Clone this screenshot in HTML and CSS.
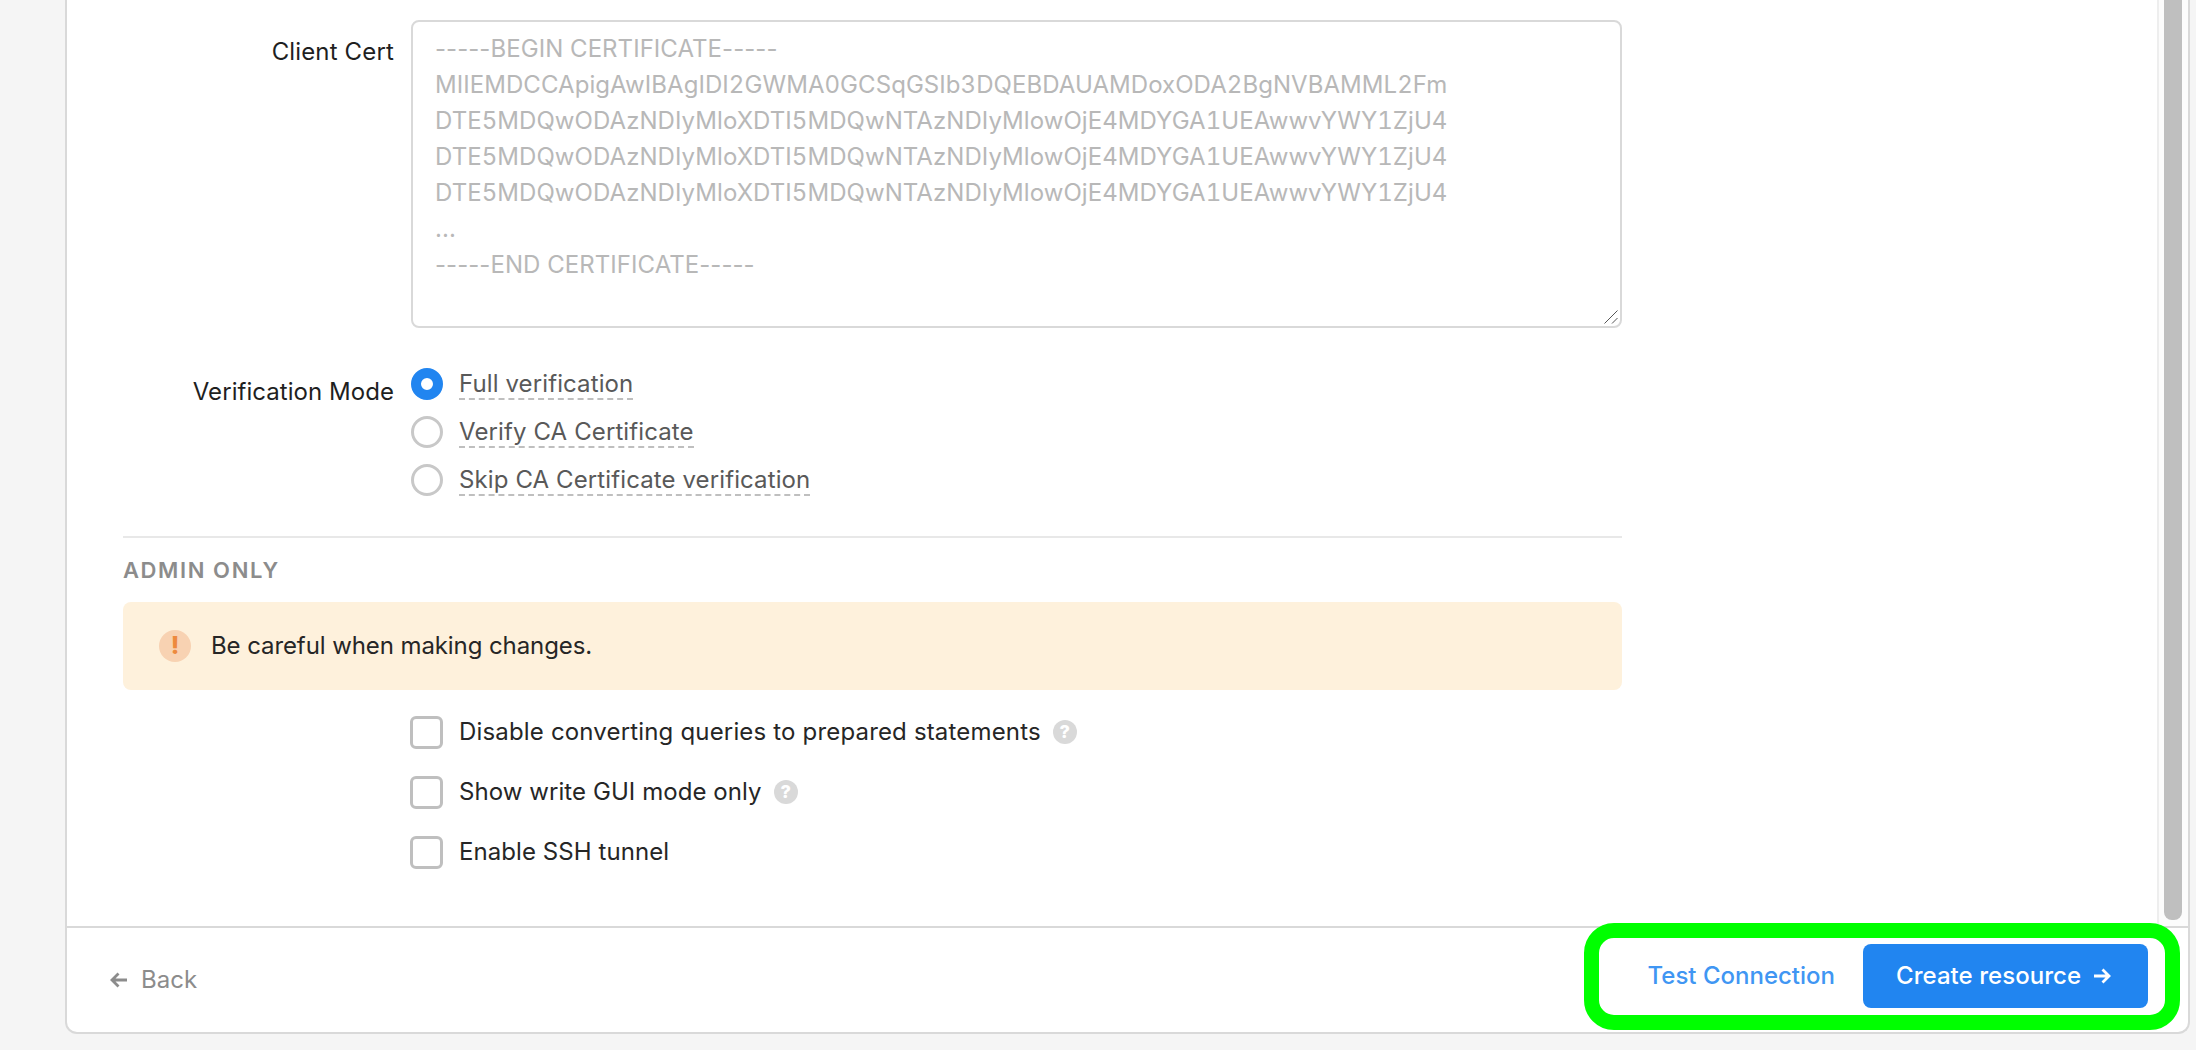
FILE: index.html
```html
<!DOCTYPE html>
<html>
<head>
<meta charset="utf-8">
<title>Create resource</title>
<link rel="stylesheet" href="styles.css">
</head>
<body>

<div class="card">
	<div class="scroll-area">
		<form class="form-body">
			<div class="form-row">
				<label class="row-label label-cert">Client Cert</label>
				<div class="cert-input">
					<div>-----BEGIN CERTIFICATE-----</div>
					<div class="cert-data">MIIEMDCCApigAwIBAgIDI2GWMA0GCSqGSIb3DQEBDAUAMDoxODA2BgNVBAMML2Fm</div>
					<div class="cert-data">DTE5MDQwODAzNDIyMloXDTI5MDQwNTAzNDIyMlowOjE4MDYGA1UEAwwvYWY1ZjU4</div>
					<div class="cert-data">DTE5MDQwODAzNDIyMloXDTI5MDQwNTAzNDIyMlowOjE4MDYGA1UEAwwvYWY1ZjU4</div>
					<div class="cert-data">DTE5MDQwODAzNDIyMloXDTI5MDQwNTAzNDIyMlowOjE4MDYGA1UEAwwvYWY1ZjU4</div>
					<div>...</div>
					<div>-----END CERTIFICATE-----</div>
					<svg class="resizer" width="14" height="14" viewBox="0 0 14 14"><path d="M0.500 13.500L13.500 0.500M8 13.500L13.500 8" fill="none" stroke="#555" stroke-width="1"/></svg>
				</div>
			</div>

			<div class="form-row radio-row">
				<label class="row-label">Verification Mode</label>
				<div class="radio-group">
					<div class="radio-item"><span class="radio checked"></span><span class="radio-text">Full verification</span></div>
					<div class="radio-item"><span class="radio"></span><span class="radio-text">Verify CA Certificate</span></div>
					<div class="radio-item"><span class="radio"></span><span class="radio-text">Skip CA Certificate verification</span></div>
				</div>
			</div>

			<hr class="divider">
			<h4 class="section-title">ADMIN ONLY</h4>

			<div class="alert">
				<span class="alert-icon">!</span>
				<span class="alert-text">Be careful when making changes.</span>
			</div>

			<div class="check-group">
				<div class="check-item"><span class="checkbox"></span><span class="check-text-wide">Disable converting queries to prepared statements</span><span class="help">?</span></div>
				<div class="check-item"><span class="checkbox"></span><span>Show write GUI mode only</span><span class="help">?</span></div>
				<div class="check-item"><span class="checkbox"></span><span>Enable SSH tunnel</span></div>
			</div>
		</form>
		<div class="scrollbar"><div class="scrollbar-thumb"></div></div>
	</div>

	<div class="card-footer">
		<a class="back-link">
			<svg class="arrow" width="18" height="16" viewBox="0 0 18 16"><path d="M17 8H2M8.500 1.500L2 8l6.500 6.500" fill="none" stroke="currentColor" stroke-width="2.800"/></svg>
			Back
		</a>
		<div class="footer-actions">
			<a class="test-link">Test Connection</a>
			<a class="create-btn"><span>Create resource</span>
				<svg class="arrow" width="18" height="16" viewBox="0 0 18 16"><path d="M1 8h15M9.500 1.500L16 8l-6.500 6.500" fill="none" stroke="currentColor" stroke-width="2.800"/></svg>
			</a>
		</div>
	</div>
</div>

</body>
</html>
```

FILE: styles.css
```css
html, body {
	margin: 0;
	height: 1050px;
	overflow: hidden;
}
body {
	background-color: #f5f5f5;
	font: 24px/36px "Inter", "Liberation Sans", sans-serif;
	font-optical-sizing: none;
	color: #262626;
}
.card {
	box-sizing: border-box;
	width: 2125px;
	height: 1034px;
	margin-left: 65px;
	background-color: #fff;
	border: 2px solid #d9d9d9;
	border-top: none;
	border-radius: 0 0 12px 12px;
	display: flex;
	flex-direction: column;
}
.scroll-area {
	display: flex;
	height: 926px;
}
.form-body {
	box-sizing: border-box;
	width: 1557px;
	padding: 20px 0 0 56px;
}
.form-row {
	display: grid;
	grid-template-columns: 271px 1211px;
	column-gap: 17px;
}
.row-label {
	padding-top: 14px;
	text-align: right;
	color: #1f1f1f;
	letter-spacing: 0.050px;
}
.label-cert {
	letter-spacing: 0.150px;
}
.cert-input {
	position: relative;
	box-sizing: border-box;
	height: 308px;
	padding: 9px 22px;
	border: 2px solid #d9d9d9;
	border-radius: 8px;
	color: #b8b8b8;
	letter-spacing: 0.050px;
}
.cert-data {
	font-feature-settings: "tnum";
	letter-spacing: 0.060px;
}
.resizer {
	position: absolute;
	right: 2px;
	bottom: 2px;
}
.radio-row {
	margin-top: 32px;
}
.radio-item {
	display: flex;
	align-items: center;
	height: 48px;
}
.radio {
	box-sizing: border-box;
	width: 32px;
	height: 32px;
	margin-right: 16px;
	border: 3px solid #c8c8c8;
	border-radius: 50%;
	background-color: #fff;
}
.radio.checked {
	border: 10px solid #2185f0;
}
.radio-text {
	padding-top: 2px;
	color: #595959;
	line-height: 28px;
	letter-spacing: 0.110px;
	border-bottom: 2px dashed #bfbfbf;
}
.divider {
	width: 1499px;
	height: 2px;
	margin: 32px 0 0;
	border: none;
	background-color: #e8e8e8;
}
.section-title {
	margin: 14px 0 0;
	font-size: 22px;
	font-weight: 600;
	letter-spacing: 1.600px;
	color: #8c8c8c;
}
.alert {
	display: flex;
	align-items: center;
	box-sizing: border-box;
	width: 1499px;
	height: 88px;
	margin-top: 14px;
	padding-left: 36px;
	border-radius: 8px;
	background-color: #fef1dc;
}
.alert-icon {
	width: 32px;
	height: 32px;
	margin-right: 20px;
	border-radius: 50%;
	background-color: #f8d2b2;
	color: #ed8a3e;
	font-size: 24px;
	font-weight: 800;
	line-height: 32px;
	text-align: center;
}
.alert-text {
	letter-spacing: -0.090px;
}
.check-group {
	margin: 12px 0 0 287px;
	letter-spacing: 0.070px;
}
.check-item {
	display: flex;
	align-items: center;
	height: 60px;
}
.check-text-wide {
	letter-spacing: 0.170px;
}
.checkbox {
	box-sizing: border-box;
	width: 33px;
	height: 33px;
	margin-right: 16px;
	border: 3px solid #bfbfbf;
	border-radius: 6px;
}
.help {
	width: 24px;
	height: 24px;
	margin-left: 12px;
	border-radius: 50%;
	background-color: #d9d9d9;
	color: #fff;
	font-size: 18px;
	font-weight: 800;
	line-height: 24px;
	text-align: center;
}
.scrollbar {
	box-sizing: border-box;
	width: 31px;
	margin-left: auto;
	padding: 0 6px 0 5px;
	border-left: 2px solid #eeeeee;
	background-color: #fcfcfc;
}
.scrollbar-thumb {
	height: 920px;
	border-radius: 0 0 8px 8px;
	background-color: #bfbfbf;
}
.card-footer {
	position: relative;
	flex: 1;
	display: flex;
	justify-content: space-between;
	align-items: flex-start;
	padding: 16px 40px 0 43px;
	border-top: 2px solid #d9d9d9;
}
.back-link {
	display: flex;
	align-items: center;
	gap: 13px;
	margin-top: 18px;
	color: #8c8c8c;
}
.footer-actions {
	display: flex;
	align-items: center;
	gap: 28px;
}
.footer-actions::after {
	content: "";
	position: absolute;
	left: 1517px;
	right: 8px;
	top: -5px;
	height: 77px;
	border: 15px solid #00ff00;
	border-radius: 30px;
}
.test-link {
	color: #4096f3;
	font-weight: 500;
}
.create-btn {
	display: flex;
	align-items: center;
	box-sizing: border-box;
	gap: 12px;
	width: 285px;
	height: 64px;
	padding-left: 33px;
	border-radius: 8px;
	background-color: #2185f0;
	color: #fff;
	font-weight: 500;
	letter-spacing: 0.050px;
}
```
